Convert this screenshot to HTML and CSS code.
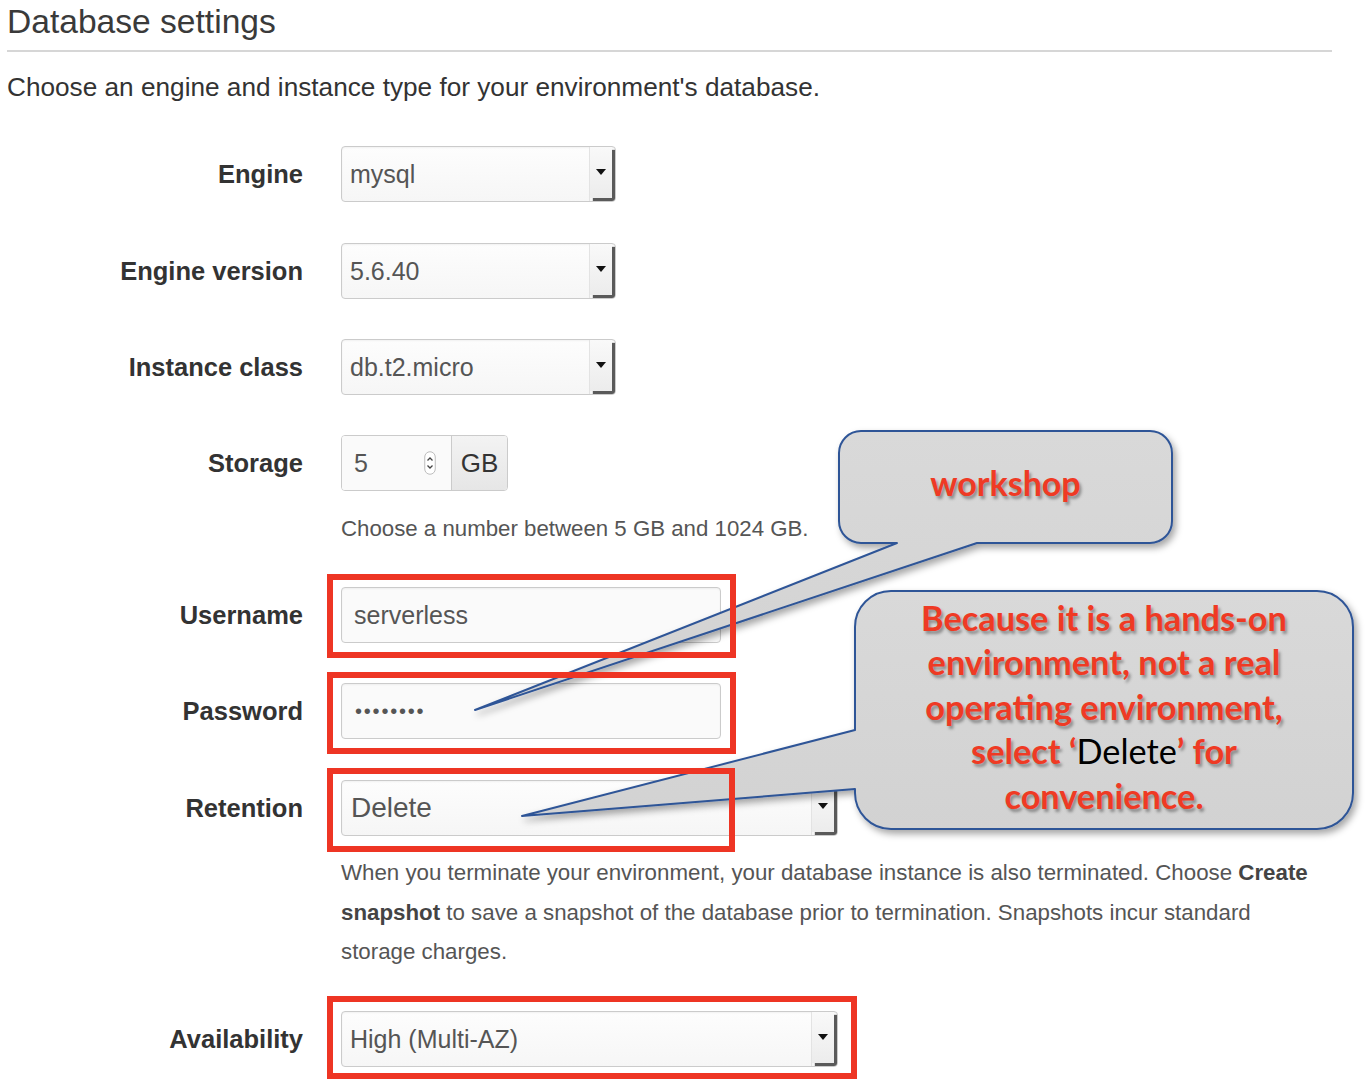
FILE: index.html
```html
<!DOCTYPE html>
<html>
<head>
<meta charset="utf-8">
<title>Database settings</title>
<link rel="stylesheet" href="styles.css">
</head>
<body>
<div class="page">
  <h1 class="title">Database settings</h1>
  <p class="intro">Choose an engine and instance type for your environment's database.</p>

  <div class="form">
    <div class="row r-engine">
      <label class="lbl">Engine</label>
      <div class="field sel w-s"><span class="val">mysql</span><span class="btn"><span class="face"><i class="tri"></i></span></span></div>
    </div>
    <div class="row r-version">
      <label class="lbl">Engine version</label>
      <div class="field sel w-s"><span class="val">5.6.40</span><span class="btn"><span class="face"><i class="tri"></i></span></span></div>
    </div>
    <div class="row r-class">
      <label class="lbl">Instance class</label>
      <div class="field sel w-s"><span class="val">db.t2.micro</span><span class="btn"><span class="face"><i class="tri"></i></span></span></div>
    </div>
    <div class="row r-storage">
      <label class="lbl">Storage</label>
      <div class="group">
        <div class="num"><span>5</span>
          <svg class="spin" width="12" height="24" viewBox="0 0 12 24"><rect x="0.75" y="0.75" width="10.5" height="22.5" rx="5.25" fill="#fff" stroke="#bdbdbd" stroke-width="1"/><path d="M3.5 9.5 L6 7 L8.5 9.5" fill="none" stroke="#444" stroke-width="1.3"/><path d="M3.5 14.5 L6 17 L8.5 14.5" fill="none" stroke="#444" stroke-width="1.3"/></svg>
        </div>
        <div class="addon">GB</div>
      </div>
    </div>
    <div class="row r-storage-help">
      <span></span>
      <p class="help">Choose a number between 5 GB and 1024 GB.</p>
    </div>
    <div class="row r-user">
      <label class="lbl">Username</label>
      <div class="hl hl-user"><div class="field inp w-m"><span class="val val-pad">serverless</span></div></div>
    </div>
    <div class="row r-pass">
      <label class="lbl">Password</label>
      <div class="hl hl-pass"><div class="field inp w-m"><span class="dots">••••••••</span></div></div>
    </div>
    <div class="row r-ret">
      <label class="lbl">Retention</label>
      <div class="hl hl-ret"><div class="field sel w-l"><span class="val val-big">Delete</span><span class="btn"><span class="face"><i class="tri"></i></span></span></div></div>
    </div>
    <div class="row r-ret-help">
      <span></span>
      <p class="help long">When you terminate your environment, your database instance is also terminated. Choose <b>Create</b><br><b>snapshot</b> to save a snapshot of the database prior to termination. Snapshots incur standard<br>storage charges.</p>
    </div>
    <div class="row r-avail">
      <label class="lbl">Availability</label>
      <div class="hl hl-avail"><div class="field sel w-l"><span class="val">High (Multi-AZ)</span><span class="btn"><span class="face"><i class="tri"></i></span></span></div></div>
    </div>
  </div>
</div>

<svg class="overlay" width="1372" height="1088" viewBox="0 0 1372 1088">
  <defs>
    <filter id="sh" x="-10%" y="-10%" width="125%" height="130%">
      <feDropShadow dx="3" dy="4" stdDeviation="3.5" flood-color="#000" flood-opacity="0.35"/>
    </filter>
    <linearGradient id="fillg" x1="0" y1="0" x2="0" y2="1">
      <stop offset="0" stop-color="#d9d9d9"/>
      <stop offset="1" stop-color="#d2d2d2"/>
    </linearGradient>
  </defs>
  <path d="M861 431 H1150 A22 22 0 0 1 1172 453 V521 A22 22 0 0 1 1150 543 H977 L475 710 L897 543 H861 A22 22 0 0 1 839 521 V453 A22 22 0 0 1 861 431 Z" fill="url(#fillg)" stroke="#2f5597" stroke-width="2" stroke-linejoin="round" filter="url(#sh)"/>
  <path d="M891 591 H1317 A36 36 0 0 1 1353 627 V793 A36 36 0 0 1 1317 829 H891 A36 36 0 0 1 855 793 V789 L522 816 L855 730 V627 A36 36 0 0 1 891 591 Z" fill="url(#fillg)" stroke="#2f5597" stroke-width="2" stroke-linejoin="round" filter="url(#sh)"/>
</svg>

<div class="note note1"><span>workshop</span></div>
<div class="note note2"><span>Because it is a hands-on<br>environment, not a real<br>operating environment,<br>select ‘<span class="blk">Delete</span>’ for<br>convenience.</span></div>
</body>
</html>
```

FILE: styles.css
```css
* { box-sizing: border-box; }
html, body { margin: 0; padding: 0; background: #fff; }
body {
  font-family: "Liberation Sans", Arial, Helvetica, sans-serif;
  color: #333;
  width: 1372px;
  height: 1088px;
  overflow: hidden;
  position: relative;
}
.page { padding: 2px 0 0 7px; }

.title {
  margin: 0;
  font-size: 33.6px;
  font-weight: normal;
  line-height: 40px;
  padding-bottom: 8px;
  border-bottom: 2px solid #d6d6d6;
  width: 1325px;
  color: #3a3a3a;
}
.intro {
  margin: 20px 0 0;
  font-size: 26.2px;
  line-height: 30px;
  color: #333;
}

.form { margin-top: 44px; }
.row {
  display: grid;
  grid-template-columns: 296px auto;
  column-gap: 38px;
  align-items: center;
  justify-items: start;
  margin-top: 40px;
}
.row.r-engine { margin-top: 0; }
.row.r-version { margin-top: 41px; }
.row.r-storage-help { margin-top: 23px; }
.row.r-user { margin-top: 43px; }
.row.r-ret { margin-top: 41px; }
.row.r-ret-help { margin-top: 17px; }
.row.r-avail { margin-top: 39.5px; }

.lbl {
  justify-self: end;
  text-align: right;
  font-weight: bold;
  font-size: 25.5px;
  color: #333;
}

.field {
  height: 56px;
  border: 1px solid #cbcbcb;
  border-radius: 4px;
  background: #fafafa;
  box-shadow: inset 0 1px 2px rgba(0, 0, 0, 0.05);
  display: flex;
  align-items: center;
  font-size: 25px;
  color: #555;
}
.w-s { width: 275px; }
.w-m { width: 380px; }
.w-l { width: 497px; }

.sel {
  overflow: hidden;
  background: linear-gradient(#fdfdfd, #f6f6f6);
}
.val { flex: 1; padding-left: 8px; white-space: nowrap; }
.val-pad { padding-left: 12px; }
.val-big { font-size: 28px; padding-left: 9px; }

.btn {
  align-self: stretch;
  width: 26px;
  border-left: 1px solid #e3e3e3;
  overflow: hidden;
}
.face {
  display: flex;
  align-items: center;
  justify-content: center;
  width: 22px;
  height: calc(100% - 3px);
  background: linear-gradient(#f9f9f9, #ececec);
  box-shadow: 3px 3px 1px #5a5a5a;
}
.tri {
  display: block;
  width: 0;
  height: 0;
  margin-top: -2px;
  border-left: 5px solid transparent;
  border-right: 5px solid transparent;
  border-top: 6px solid #111;
}

.group {
  display: flex;
  width: 167px;
  height: 56px;
  border: 1px solid #cbcbcb;
  border-radius: 4px;
  overflow: hidden;
}
.num {
  width: 109px;
  display: flex;
  align-items: center;
  justify-content: space-between;
  padding: 0 15px 0 12px;
  background: #fafafa;
  font-size: 25px;
  color: #555;
}
.spin { display: block; }
.addon {
  flex: 1;
  border-left: 1px solid #cbcbcb;
  background: linear-gradient(#f3f3f3, #e6e6e6);
  display: flex;
  align-items: center;
  justify-content: center;
  font-size: 26px;
  color: #333;
}

.help {
  margin: 0;
  font-size: 22.25px;
  line-height: 30px;
  color: #555;
  white-space: nowrap;
}
.help.long { font-size: 22.3px; line-height: 39.5px; }
.help b { color: #444; }

.dots {
  padding-left: 13px;
  font-size: 20px;
  letter-spacing: 1.8px;
  color: #555;
}

.hl { position: relative; }
.hl::after {
  content: "";
  position: absolute;
  border: 6px solid #ee3524;
  z-index: 2;
}
.hl-user::after { top: -13px; left: -14px; right: -15px; bottom: -15px; }
.hl-pass::after { top: -11px; left: -14px; right: -15px; bottom: -15px; }
.hl-ret::after { top: -12px; left: -14px; right: 103px; bottom: -16px; }
.hl-avail::after { top: -15px; left: -14px; right: -19px; bottom: -12px; }

.overlay {
  position: absolute;
  top: 0;
  left: 0;
  z-index: 1;
  pointer-events: none;
}

.note {
  position: absolute;
  z-index: 3;
  display: flex;
  align-items: center;
  justify-content: center;
  text-align: center;
  font-family: Lato, "Open Sans", "Liberation Sans", sans-serif;
  font-weight: bold;
  color: #ef3a24;
  text-shadow: 2px 3px 3px rgba(0, 0, 0, 0.35);
}
.note1 {
  left: 839px;
  top: 431px;
  width: 333px;
  height: 103px;
  font-size: 34px;
}
.note2 {
  left: 855px;
  top: 589px;
  width: 498px;
  height: 236px;
  font-size: 34.3px;
  line-height: 44.5px;
}
.blk {
  color: #000;
  font-weight: normal;
  text-shadow: none;
}
```
